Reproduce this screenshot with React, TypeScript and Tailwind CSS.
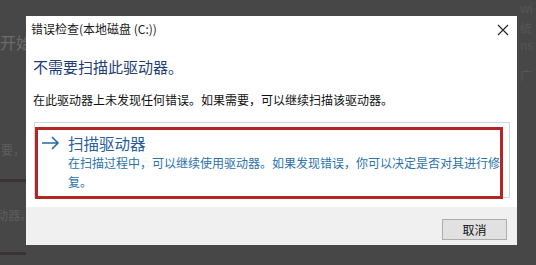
import React from "react";

const font = { fontFamily: '"Noto Sans CJK SC", "Noto Sans", sans-serif' };

export default function App() {
  return (
    <div
      className="w-[536px] h-[265px] bg-[#474747] flex overflow-hidden text-[12px]"
      style={font}
    >
      {/* left background strip */}
      <div className="w-[26px] shrink-0 flex flex-col overflow-hidden text-[#6b6b6b]">
        <div className="mt-[32px] h-[20px] leading-[20px] text-[16px] whitespace-nowrap">开始</div>
        <div className="mt-[90px] h-[16px] leading-[16px] whitespace-nowrap text-[#5e5e5e] pl-[1px]">要，</div>
        <div className="mt-[21px] h-[3px] bg-[#3b3333]"></div>
        <div className="mt-[25px] h-[16px] leading-[16px] whitespace-nowrap text-[#5e5e5e] -ml-[4px]">动器。</div>
        <div className="mt-[29px] h-[3px] bg-[#3b3333]"></div>
      </div>

      {/* dialog */}
      <div className="relative mt-[16px] w-[491px] h-[229px] shrink-0 bg-white flex flex-col">
        <div className="h-[26px] flex items-center justify-between pl-[5px] pr-[8px]">
          <span className="text-[12px] leading-[16px] text-[#1a1a1a]">错误检查(本地磁盘 (C:))</span>
          <svg width="12" height="12" viewBox="0 0 12 12" className="mt-[2px]">
            <path d="M1 1 L11 11 M11 1 L1 11" stroke="#222" strokeWidth="1.1" fill="none" />
          </svg>
        </div>

        <div className="mt-[15px] pl-[7px] text-[15px] leading-[20px] text-[#1f3e75]">
          不需要扫描此驱动器。
        </div>
        <div className="mt-[15px] pl-[7px] text-[12px] leading-[16px] text-[#111]">
          在此驱动器上未发现任何错误。如果需要，可以继续扫描该驱动器。
        </div>

        <div className="mt-[14px] ml-[8px] w-[476px] h-[76px] border border-[#cfd7e3] flex pl-[6px] pt-[10px]">
          <svg width="19" height="20" viewBox="0 0 19 20" className="shrink-0">
            <path d="M1 10 H17 M11 4 L17 10 L11 16" stroke="#2a67a4" strokeWidth="1.6" fill="none" />
          </svg>
          <div className="ml-[8px] flex flex-col">
            <div className="text-[15.5px] leading-[20px] text-[#2a5e9a]">扫描驱动器</div>
            <div className="text-[12px] leading-[19px] text-[#2a72aa]">
              在扫描过程中，可以继续使用驱动器。如果发现错误，你可以决定是否对其进行修
              <br />
              复。
            </div>
          </div>
        </div>

        <div className="mt-auto h-[38px] bg-[#f0f0f0] flex items-start justify-end pr-[10px] pt-[12px]">
          <div className="w-[65px] h-[21px] bg-[#e1e1e1] border border-[#adadad] flex items-center justify-center text-[12px] text-[#111]">
            取消
          </div>
        </div>

        {/* red annotation box */}
        <div className="absolute left-[9px] top-[111px] w-[468px] h-[72px] border-[3px] border-[#b32626]"></div>
      </div>

      {/* right background strip */}
      <div className="flex-1 flex flex-col overflow-hidden pl-[3px] text-[#565656]">
        <div className="mt-[0px] h-[16px] leading-[16px] whitespace-nowrap">wi</div>
        <div className="mt-[4px] h-[16px] leading-[16px] whitespace-nowrap">统</div>
        <div className="mt-[1px] h-[16px] leading-[16px] whitespace-nowrap">ns</div>
        <div className="mt-[14px] h-[16px] leading-[16px] whitespace-nowrap">广</div>
      </div>
    </div>
  );
}
